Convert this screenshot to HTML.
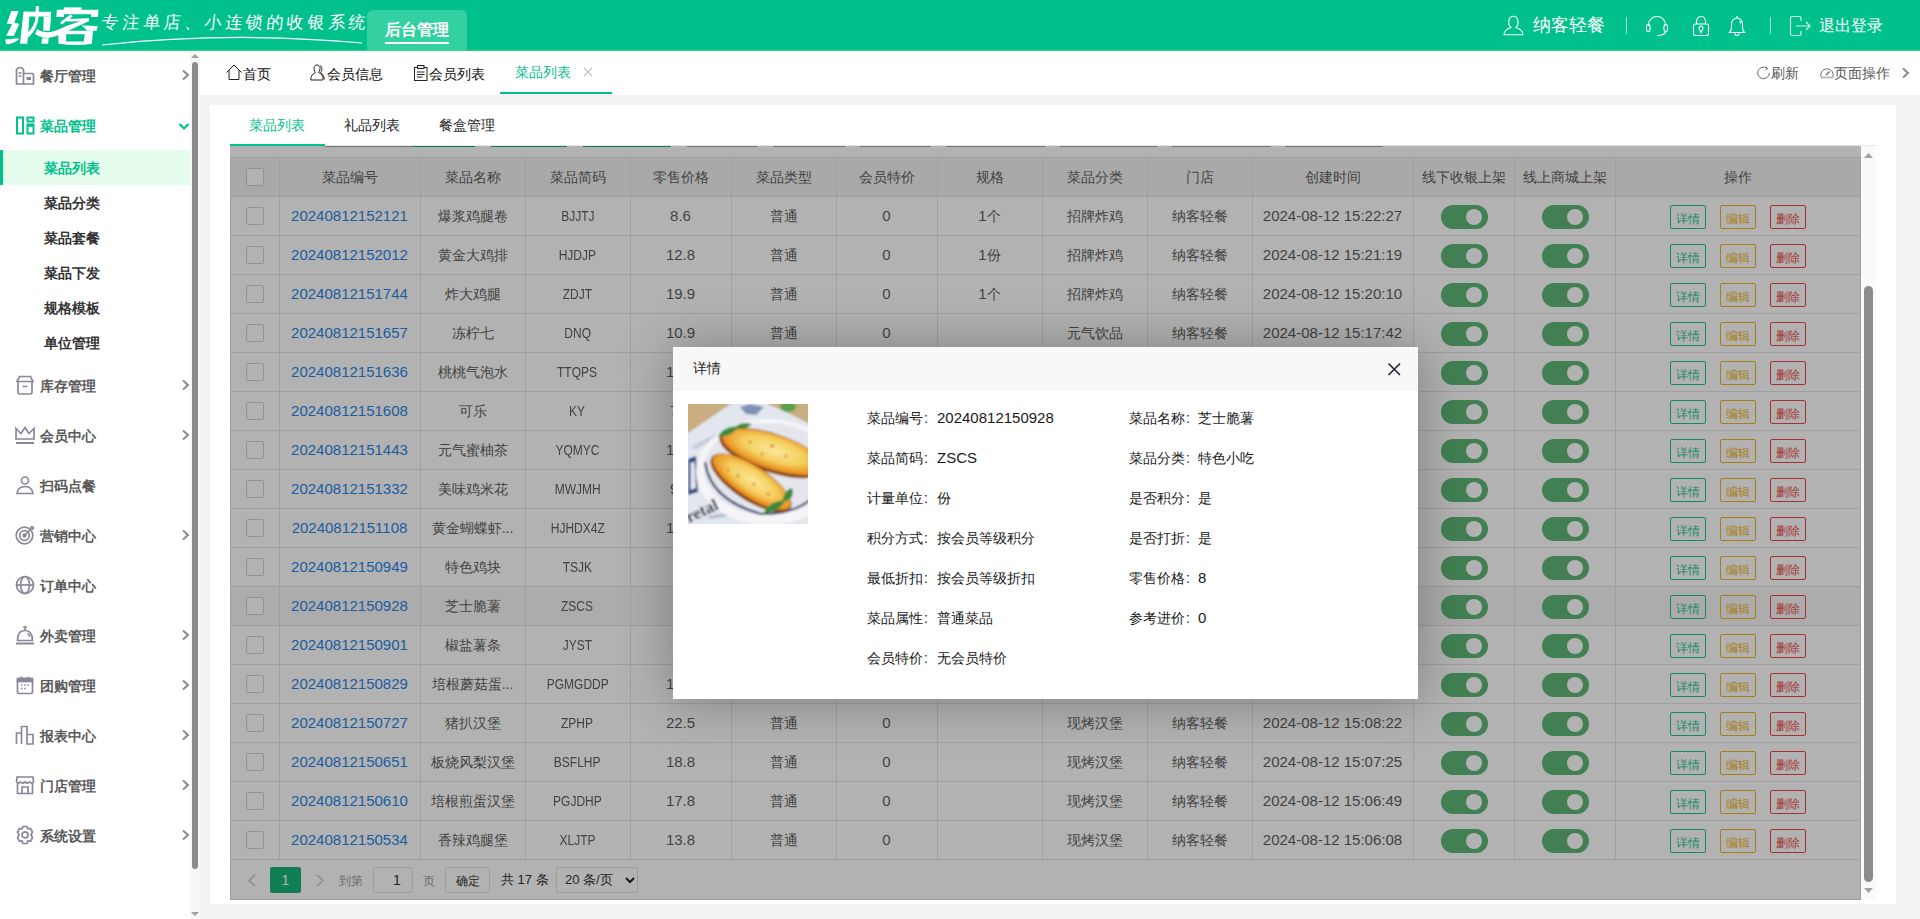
<!DOCTYPE html><html><head><meta charset="utf-8"><title>纳客</title><style>
*{margin:0;padding:0;box-sizing:border-box}
html,body{width:1920px;height:919px;overflow:hidden;background:#f3f3f3;font-family:"Liberation Sans",sans-serif;font-size:14px;color:#333}
.a{position:absolute}
#hd{left:0;top:0;width:1920px;height:50px;background:#00c18c}
#hdl{left:0;top:50px;width:1920px;height:1px;background:#3cd27c}
.logo{left:7px;top:4px;font-size:39px;font-weight:900;color:#fff;-webkit-text-stroke:1.6px #fff;letter-spacing:-1px;line-height:44px;transform:scaleX(1.16) skewX(-10deg);transform-origin:0 100%}
.tag{left:102px;top:10px;font-family:"Liberation Serif",serif;font-size:17px;color:#fff;letter-spacing:3.55px;line-height:26px;white-space:nowrap;transform:skewX(-6deg)}
.htab{left:367px;top:10px;width:100px;height:40px;background:#33d1a1;border-radius:6px 6px 0 0}
.htab span{position:absolute;left:18px;top:10px;font-size:16px;font-weight:bold;color:#fff;line-height:20px;white-space:nowrap}
.htab i{position:absolute;left:18px;top:32px;width:64px;height:2px;background:#fff}
.hr{color:#fff;white-space:nowrap;line-height:20px}
#sb{left:0;top:51px;width:190px;height:868px;background:#fff}
#sbt{left:190px;top:51px;width:10px;height:868px;background:#f7f7f7}
.sth{left:192px;top:62px;width:6px;height:807px;background:#8c8c8c;border-radius:3px}
.mi{left:40px;font-size:14px;font-weight:bold;color:#5a5a5a;line-height:16px;white-space:nowrap}
.si{left:44px;font-size:14px;font-weight:bold;color:#333;line-height:16px;white-space:nowrap}
.arr{left:180px;width:10px;height:12px}
#tb{left:200px;top:51px;width:1720px;height:44px;background:#fff}
#gbg{left:200px;top:95px;width:1720px;height:824px;background:#f3f3f3}
.tt{font-size:14px;color:#111;line-height:16px;white-space:nowrap}
#card{left:210px;top:105px;width:1686px;height:799px;background:#fff}
.st{top:117px;font-size:14px;color:#222;line-height:16px;white-space:nowrap}
#ifr{left:230px;top:146px;width:1646px;height:754px;background:#fff;overflow:hidden}
.c{position:absolute;text-align:center;white-space:nowrap;line-height:40px;font-size:14px;color:#5f5f5f;overflow:hidden}
.vl{position:absolute;width:1px;background:#e4e4e4}
.hl{position:absolute;height:1px;background:#e4e4e4}
.lnk{color:#2a86e6}
.n{font-size:15px}
.cd{display:inline-block;font-size:15px;transform:scaleX(.8)}
.cb{position:absolute;width:18px;height:18px;border:1px solid #d2d2d2;border-radius:2px;background:#fff}
.sw{position:absolute;width:47px;height:24px;border-radius:12px;background:#5fb878}
.sw i{position:absolute;right:6px;top:4px;width:16px;height:16px;border-radius:50%;background:#fff}
.bt{position:absolute;width:36px;height:24px;border:1px solid;border-radius:2px;font-size:12px;line-height:26px;text-align:center;white-space:nowrap}
.b1{border-color:#1dc498;color:#1dc498}
.b2{border-color:#f2b51c;color:#f2b51c}
.b3{border-color:#f04545;color:#f04545}
#shade{left:230px;top:146px;width:1631px;height:754px;background:rgba(0,0,0,.3)}
#modal{left:673px;top:347px;width:745px;height:352px;background:#fff;box-shadow:1px 1px 50px rgba(0,0,0,.3)}
.mt{position:absolute;left:0;top:0;width:745px;height:43px;background:#f8f8f8;border-bottom:1px solid #f0f0f0}
.ml{position:absolute;font-size:14px;color:#1a1a1a;line-height:20px;white-space:nowrap}
</style></head><body><div id="hd" class="a"></div><div id="hdl" class="a"></div><svg class="a" style="left:0;top:0" width="105" height="50" viewBox="0 0 1920 914" fill="#fff">
<path d="M205 200 L340 200 L262 412 L352 440 L255 655 L115 655 L220 445 L125 430 Z"/>
<path d="M95 720 L345 700 L330 738 Q250 790 150 810 L110 805 Z"/>
<path d="M430 215 L545 215 L500 800 L365 800 Z"/>
<path d="M430 215 L935 215 L930 300 L540 300 Z"/>
<path d="M800 300 L935 300 L910 560 L790 560 Z"/>
<path d="M770 700 L890 700 L880 800 L755 800 Z"/>
<path d="M655 110 L712 110 L705 300 L650 300 Z"/>
<path d="M650 300 L705 300 Q700 510 515 690 L505 600 Q640 470 650 300 Z"/>
<path d="M680 535 Q760 590 870 590 Q980 590 1200 480 L1625 335 L1630 385 L1250 560 Q1000 680 880 695 Q760 700 640 620 Z"/>
<path d="M1165 135 L1490 135 L1490 190 L1165 190 Z"/>
<path d="M1040 180 L1800 180 L1790 310 L1665 310 L1665 260 L1170 260 L1170 310 L1030 310 Z"/>
<path d="M1290 265 L1330 300 L1130 450 L1095 410 Z"/>
<path d="M1220 345 L1625 335 L1620 390 L1220 395 Z"/>
<path d="M1490 460 L1790 480 L1765 560 L1600 560 Z"/>
<path fill-rule="evenodd" d="M1065 560 L1700 560 L1680 800 Q1400 845 1070 800 Z M1210 625 L1550 625 L1530 760 L1210 760 Z"/>
</svg><div class="a tag">专注单店、小连锁的收银系统</div><svg class="a" style="left:100px;top:34px" width="265" height="14"><path d="M2 11 Q 130 -3 262 9" stroke="#fff" stroke-width="1.2" fill="none"/></svg><div class="a htab"><span>后台管理</span><i></i></div><svg class="a" style="left:1503px;top:15px" width="22" height="22" viewBox="0 0 22 22" fill="none" stroke="#fff" stroke-width="1.1"><path d="M8 12.6 C4.5 10 5 1.2 10.4 1.2 C15.8 1.2 16.3 10 12.8 12.6 C17 14 20 16 20 19.7 H1 C1 16 4 14 8 12.6 Z"/></svg><div class="a hr" style="left:1533px;top:15px;font-size:18px">纳客轻餐</div><div class="a" style="left:1626px;top:17px;width:1px;height:17px;background:rgba(255,255,255,.6)"></div><svg class="a" style="left:1645px;top:15px" width="24" height="22" viewBox="0 0 24 22" fill="none" stroke="#fff" stroke-width="1.1"><path d="M3.5 11 V9.5 A8.5 8 0 0 1 20.5 9.5 V11"/><rect x="1.5" y="9.5" width="3.5" height="7" rx="1.7"/><rect x="19" y="9.5" width="3.5" height="7" rx="1.7"/><path d="M21 16.5 Q19.5 20.5 12 20.5"/></svg><svg class="a" style="left:1692px;top:15px" width="18" height="22" viewBox="0 0 18 22" fill="none" stroke="#fff" stroke-width="1.1"><path d="M4.5 9 V6 A4.5 4.5 0 0 1 13.5 6 V9"/><rect x="1.5" y="9" width="15" height="11.5" rx="2"/><path d="M9 17.5 L7.3 14.3 A2 2 0 1 1 10.7 14.3 Z"/></svg><svg class="a" style="left:1728px;top:15px" width="18" height="22" viewBox="0 0 18 22" fill="none" stroke="#fff" stroke-width="1.1"><path d="M9 1 V3"/><path d="M1.5 17.5 Q3.5 16 3.5 12 V9 A5.5 6 0 0 1 14.5 9 V12 Q14.5 16 16.5 17.5 Z"/><path d="M7 18.5 A2 2 0 0 0 11 18.5 M11.5 6 Q12.5 7 12.8 8.5"/></svg><div class="a" style="left:1770px;top:17px;width:1px;height:17px;background:rgba(255,255,255,.6)"></div><svg class="a" style="left:1789px;top:15px" width="23" height="22" viewBox="0 0 23 22" fill="none" stroke="rgba(255,255,255,.8)" stroke-width="1.2"><path d="M12 6 V3 A1.5 1.5 0 0 0 10.5 1.5 H3 A1.5 1.5 0 0 0 1.5 3 V19 A1.5 1.5 0 0 0 3 20.5 H10.5 A1.5 1.5 0 0 0 12 19 V16"/><path d="M7 11 H21 M17 7 L21 11 L17 15"/></svg><div class="a hr" style="left:1819px;top:16px;font-size:16px">退出登录</div><div id="sb" class="a"></div><div id="sbt" class="a"></div><div class="a sth"></div><svg class="a" style="left:191px;top:53px" width="8" height="5"><path d="M0 5 L4 1 L8 5 Z" fill="#a0a0a0"/></svg><svg class="a" style="left:191px;top:912px" width="8" height="5"><path d="M0 0 L4 4 L8 0 Z" fill="#a0a0a0"/></svg><svg class="a" style="left:15px;top:65px" width="20" height="20" viewBox="0 0 20 20" fill="none" stroke="#8a8799" stroke-width="1.7"><path d="M1.5 19 V4.5 Q5 0.5 8.5 4.5 V19 Z M8.5 8.5 H17 Q18.5 8.5 18.5 10 V19 H1.5 M3.5 8 H6.5 M3.5 11 H6.5"/><rect x="11.5" y="12" width="4.5" height="3" fill="#8a8799" stroke="none"/></svg><div class="a mi" style="top:68px">餐厅管理</div><svg class="a" style="left:181px;top:69px" width="9" height="12"><path d="M2 1.5 L7 6 L2 10.5" stroke="#8a8799" stroke-width="2" fill="none"/></svg><svg class="a" style="left:15px;top:375px" width="20" height="20" viewBox="0 0 20 20" fill="none" stroke="#8a8799" stroke-width="1.7"><path d="M2 6.5 L4.5 1.5 H15.5 L18 6.5 Z M3 6.5 V17.5 Q3 19 4.5 19 H15.5 Q17 19 17 17.5 V6.5 M7.5 11.5 H12.5"/></svg><div class="a mi" style="top:378px">库存管理</div><svg class="a" style="left:181px;top:379px" width="9" height="12"><path d="M2 1.5 L7 6 L2 10.5" stroke="#8a8799" stroke-width="2" fill="none"/></svg><svg class="a" style="left:15px;top:425px" width="20" height="20" viewBox="0 0 20 20" fill="none" stroke="#8a8799" stroke-width="1.7"><path d="M1 3.5 L6 8.5 L10 2.5 L14 8.5 L19 3.5 V14 H1 Z"/><path d="M1 18 H19" stroke-width="2"/></svg><div class="a mi" style="top:428px">会员中心</div><svg class="a" style="left:181px;top:429px" width="9" height="12"><path d="M2 1.5 L7 6 L2 10.5" stroke="#8a8799" stroke-width="2" fill="none"/></svg><svg class="a" style="left:15px;top:475px" width="20" height="20" viewBox="0 0 20 20" fill="none" stroke="#8a8799" stroke-width="1.7"><circle cx="10" cy="5.5" r="3.5"/><path d="M2 18.5 Q3 11.5 10 11.5 Q17 11.5 18 18.5 Z"/></svg><div class="a mi" style="top:478px">扫码点餐</div><svg class="a" style="left:15px;top:525px" width="20" height="20" viewBox="0 0 20 20" fill="none" stroke="#8a8799" stroke-width="1.7"><circle cx="9.5" cy="10.5" r="8.3"/><circle cx="9.5" cy="10.5" r="4.8"/><circle cx="9.5" cy="10.5" r="1.3" fill="#8a8799"/><path d="M9.5 10.5 L17.5 2.5 M15 2 L18 2 L18 5"/></svg><div class="a mi" style="top:528px">营销中心</div><svg class="a" style="left:181px;top:529px" width="9" height="12"><path d="M2 1.5 L7 6 L2 10.5" stroke="#8a8799" stroke-width="2" fill="none"/></svg><svg class="a" style="left:15px;top:575px" width="20" height="20" viewBox="0 0 20 20" fill="none" stroke="#8a8799" stroke-width="1.7"><circle cx="10" cy="10" r="8.5"/><ellipse cx="10" cy="10" rx="4.5" ry="8.5"/><path d="M1.5 10 H18.5"/></svg><div class="a mi" style="top:578px">订单中心</div><svg class="a" style="left:15px;top:625px" width="20" height="20" viewBox="0 0 20 20" fill="none" stroke="#8a8799" stroke-width="1.7"><path d="M2.5 15.5 Q2.5 5.5 10 5.5 Q17.5 5.5 17.5 15.5 Z M8 2 H12 M10 2 V5.5 M12.5 8.5 Q14.5 9.5 15 11.5"/><path d="M1 18.5 H19" stroke-width="2"/></svg><div class="a mi" style="top:628px">外卖管理</div><svg class="a" style="left:181px;top:629px" width="9" height="12"><path d="M2 1.5 L7 6 L2 10.5" stroke="#8a8799" stroke-width="2" fill="none"/></svg><svg class="a" style="left:15px;top:675px" width="20" height="20" viewBox="0 0 20 20" fill="none" stroke="#8a8799" stroke-width="1.7"><rect x="2.5" y="3.5" width="15" height="15" rx="1.5"/><rect x="2.5" y="3.5" width="15" height="3" fill="#8a8799"/><path d="M6.5 1.5 V4 M13.5 1.5 V4 M6 10 H7.5 M9.3 10 H10.8 M12.5 10 H14 M6 13.5 H7.5 M9.3 13.5 H10.8" stroke-width="1.6"/></svg><div class="a mi" style="top:678px">团购管理</div><svg class="a" style="left:181px;top:679px" width="9" height="12"><path d="M2 1.5 L7 6 L2 10.5" stroke="#8a8799" stroke-width="2" fill="none"/></svg><svg class="a" style="left:15px;top:725px" width="20" height="20" viewBox="0 0 20 20" fill="none" stroke="#8a8799" stroke-width="1.7"><path d="M1.5 19 V8 H6.5 V19 M6.5 19 V1.5 H12 V19 M12 19 V9.5 H18 V19 Z"/></svg><div class="a mi" style="top:728px">报表中心</div><svg class="a" style="left:181px;top:729px" width="9" height="12"><path d="M2 1.5 L7 6 L2 10.5" stroke="#8a8799" stroke-width="2" fill="none"/></svg><svg class="a" style="left:15px;top:775px" width="20" height="20" viewBox="0 0 20 20" fill="none" stroke="#8a8799" stroke-width="1.7"><path d="M2 2 H18 L18.5 7 Q16.5 9 14.5 7 Q12.5 9 10 7 Q7.5 9 5.5 7 Q3.5 9 1.5 7 Z M2.5 8 V18.5 H17.5 V8 M7 18.5 V12 H13 V18.5"/></svg><div class="a mi" style="top:778px">门店管理</div><svg class="a" style="left:181px;top:779px" width="9" height="12"><path d="M2 1.5 L7 6 L2 10.5" stroke="#8a8799" stroke-width="2" fill="none"/></svg><svg class="a" style="left:15px;top:825px" width="20" height="20" viewBox="0 0 20 20" fill="none" stroke="#8a8799" stroke-width="1.7"><path d="M8 1.5 H12 L13 4 L15.5 3.5 L17.5 7 L16 9.8 L17.5 12.8 L15.5 16.3 L13 15.8 L12 18.5 H8 L7 15.8 L4.5 16.3 L2.5 12.8 L4 9.8 L2.5 7 L4.5 3.5 L7 4 Z"/><circle cx="10" cy="9.9" r="3"/></svg><div class="a mi" style="top:828px">系统设置</div><svg class="a" style="left:181px;top:829px" width="9" height="12"><path d="M2 1.5 L7 6 L2 10.5" stroke="#8a8799" stroke-width="2" fill="none"/></svg><svg class="a" style="left:15px;top:116px" width="20" height="19" viewBox="0 0 20 19" fill="none" stroke="#00c18c" stroke-width="2"><rect x="2" y="1.5" width="6" height="16"/><rect x="12.5" y="1.5" width="6" height="4"/><rect x="12.5" y="8.5" width="6" height="9"/><path d="M12.5 9.3 H18.5" stroke-width="3"/></svg><div class="a mi" style="top:118px;color:#00c18c">菜品管理</div><svg class="a" style="left:178px;top:122px" width="12" height="9"><path d="M1.5 2 L6 6.5 L10.5 2" stroke="#00c18c" stroke-width="2.2" fill="none"/></svg><div class="a" style="left:0;top:150px;width:190px;height:35px;background:#e5fbec"></div><div class="a" style="left:0;top:150px;width:3px;height:35px;background:#00c18c"></div><div class="a si" style="top:160px;color:#00c18c">菜品列表</div><div class="a si" style="top:195px">菜品分类</div><div class="a si" style="top:230px">菜品套餐</div><div class="a si" style="top:265px">菜品下发</div><div class="a si" style="top:300px">规格模板</div><div class="a si" style="top:335px">单位管理</div><div id="tb" class="a"></div><svg class="a" style="left:226px;top:64px" width="17" height="17" viewBox="0 0 17 17" fill="none" stroke="#222" stroke-width="1"><path d="M0.5 8.5 L8 1 L15.5 8.5 M3 6 V15.5 H13 V6"/></svg><div class="a tt" style="left:243px;top:66px">首页</div><svg class="a" style="left:310px;top:64px" width="17" height="17" viewBox="0 0 17 17" fill="none" stroke="#222" stroke-width="1"><path d="M7 1 C3.5 1 3 5.5 5.5 8.5 C2 10 0.5 13 0.8 16 H13 C13.3 13 12 10 8.5 8.5 C11 5.5 10.5 1 7 1 Z M10 1.5 C12.5 2.5 12.5 6.5 10.5 8.5 C13 10 14.3 13 14.3 15.5"/></svg><div class="a tt" style="left:327px;top:66px">会员信息</div><svg class="a" style="left:414px;top:65px" width="14" height="16" viewBox="0 0 14 16" fill="none" stroke="#222" stroke-width="1"><rect x="0.5" y="2.5" width="12.5" height="13"/><rect x="3.5" y="0.5" width="6.5" height="3" fill="#e8e8e8"/><path d="M3 7 H10.5 M3 9.5 H10.5 M3 12 H8.5"/></svg><div class="a tt" style="left:429px;top:66px">会员列表</div><div class="a tt" style="left:515px;top:64px;color:#00c18c">菜品列表</div><svg class="a" style="left:583px;top:67px" width="10" height="10"><path d="M1 1 L9 9 M9 1 L1 9" stroke="#c2c2c2" stroke-width="1.2"/></svg><div class="a" style="left:500px;top:92px;width:112px;height:2px;background:#00c18c"></div><svg class="a" style="left:1757px;top:66px" width="14" height="14" viewBox="0 0 14 14" fill="none" stroke="#666" stroke-width="1"><path d="M12.3 7 A5.8 5.8 0 1 1 10 2.3"/><path d="M8.8 0.8 L10.6 2.4 L9 4.3"/></svg><div class="a tt" style="left:1771px;top:65px;color:#555">刷新</div><svg class="a" style="left:1820px;top:66px" width="15" height="14" viewBox="0 0 15 14" fill="none" stroke="#666" stroke-width="1"><path d="M1.3 11.5 A6.2 6.2 0 1 1 12.7 11.5"/><path d="M1 11.5 H13" stroke="#bbb" stroke-width="2"/><path d="M6 9 L9.5 5.5" stroke-width="1.3"/></svg><div class="a tt" style="left:1834px;top:65px;color:#555">页面操作</div><svg class="a" style="left:1901px;top:67px" width="9" height="13"><path d="M2 1.5 L7 6 L2 10.5" stroke="#8a8799" stroke-width="2" fill="none"/></svg><div id="card" class="a"></div><div class="a st" style="left:249px;color:#00c18c">菜品列表</div><div class="a st" style="left:344px">礼品列表</div><div class="a st" style="left:439px">餐盒管理</div><div class="a" style="left:230px;top:145px;width:1646px;height:1px;background:#e6e6e6"></div><div class="a" style="left:230px;top:144px;width:95px;height:2px;background:#00c18c"></div><div id="ifr" class="a"><div class="hl" style="left:95px;top:0;width:87px;background:#aaa"></div><div class="hl" style="left:182px;top:0;width:63px;background:#16b777"></div><div class="hl" style="left:261px;top:0;width:76px;background:#16b777"></div><div class="hl" style="left:353px;top:0;width:88px;background:#16b777"></div><div class="hl" style="left:457px;top:0;width:70px;background:#aaa"></div><div class="hl" style="left:543px;top:0;width:72px;background:#aaa"></div><div class="hl" style="left:630px;top:0;width:71px;background:#aaa"></div><div class="hl" style="left:716px;top:0;width:99px;background:#aaa"></div><div class="hl" style="left:830px;top:0;width:97px;background:#aaa"></div><div class="hl" style="left:942px;top:0;width:99px;background:#aaa"></div><div class="hl" style="left:1055px;top:0;width:98px;background:#aaa"></div><div class="a" style="left:0;top:11px;width:1630px;height:39px;background:#f2f2f2"></div><div class="a" style="left:0;top:440px;width:1630px;height:39px;background:#f6f6f6"></div><div class="hl" style="left:0;top:11px;width:1630px"></div><div class="hl" style="left:0;top:50px;width:1630px"></div><div class="hl" style="left:0;top:89px;width:1630px"></div><div class="hl" style="left:0;top:128px;width:1630px"></div><div class="hl" style="left:0;top:167px;width:1630px"></div><div class="hl" style="left:0;top:206px;width:1630px"></div><div class="hl" style="left:0;top:245px;width:1630px"></div><div class="hl" style="left:0;top:284px;width:1630px"></div><div class="hl" style="left:0;top:323px;width:1630px"></div><div class="hl" style="left:0;top:362px;width:1630px"></div><div class="hl" style="left:0;top:401px;width:1630px"></div><div class="hl" style="left:0;top:440px;width:1630px"></div><div class="hl" style="left:0;top:479px;width:1630px"></div><div class="hl" style="left:0;top:518px;width:1630px"></div><div class="hl" style="left:0;top:557px;width:1630px"></div><div class="hl" style="left:0;top:596px;width:1630px"></div><div class="hl" style="left:0;top:635px;width:1630px"></div><div class="hl" style="left:0;top:674px;width:1630px"></div><div class="hl" style="left:0;top:713px;width:1630px"></div><div class="hl" style="left:0;top:753px;width:1631px"></div><div class="vl" style="left:0px;top:11px;height:743px"></div><div class="vl" style="left:49px;top:11px;height:702px"></div><div class="vl" style="left:190px;top:11px;height:702px"></div><div class="vl" style="left:295px;top:11px;height:702px"></div><div class="vl" style="left:400px;top:11px;height:702px"></div><div class="vl" style="left:501px;top:11px;height:702px"></div><div class="vl" style="left:606px;top:11px;height:702px"></div><div class="vl" style="left:707px;top:11px;height:702px"></div><div class="vl" style="left:812px;top:11px;height:702px"></div><div class="vl" style="left:917px;top:11px;height:702px"></div><div class="vl" style="left:1022px;top:11px;height:702px"></div><div class="vl" style="left:1183px;top:11px;height:702px"></div><div class="vl" style="left:1284px;top:11px;height:702px"></div><div class="vl" style="left:1385px;top:11px;height:702px"></div><div class="vl" style="left:1630px;top:11px;height:743px"></div><div class="cb" style="left:16px;top:22px"></div><div class="c" style="left:49px;top:11px;width:141px;height:38px">菜品编号</div><div class="c" style="left:190px;top:11px;width:105px;height:38px">菜品名称</div><div class="c" style="left:295px;top:11px;width:105px;height:38px">菜品简码</div><div class="c" style="left:400px;top:11px;width:101px;height:38px">零售价格</div><div class="c" style="left:501px;top:11px;width:105px;height:38px">菜品类型</div><div class="c" style="left:606px;top:11px;width:101px;height:38px">会员特价</div><div class="c" style="left:707px;top:11px;width:105px;height:38px">规格</div><div class="c" style="left:812px;top:11px;width:105px;height:38px">菜品分类</div><div class="c" style="left:917px;top:11px;width:105px;height:38px">门店</div><div class="c" style="left:1022px;top:11px;width:161px;height:38px">创建时间</div><div class="c" style="left:1183px;top:11px;width:101px;height:38px">线下收银上架</div><div class="c" style="left:1284px;top:11px;width:101px;height:38px">线上商城上架</div><div class="c" style="left:1385px;top:11px;width:245px;height:38px">操作</div><div class="cb" style="left:16px;top:61px"></div><div class="c lnk n" style="left:49px;top:50px;width:141px;height:38px">20240812152121</div><div class="c" style="left:190px;top:50px;width:105px;height:38px">爆浆鸡腿卷</div><div class="c" style="left:295px;top:50px;width:105px;height:38px"><span class="cd">BJJTJ</span></div><div class="c n" style="left:400px;top:50px;width:101px;height:38px">8.6</div><div class="c" style="left:501px;top:50px;width:105px;height:38px">普通</div><div class="c n" style="left:606px;top:50px;width:101px;height:38px">0</div><div class="c" style="left:707px;top:50px;width:105px;height:38px"><span class="n">1</span>个</div><div class="c" style="left:812px;top:50px;width:105px;height:38px">招牌炸鸡</div><div class="c" style="left:917px;top:50px;width:105px;height:38px">纳客轻餐</div><div class="c n" style="left:1022px;top:50px;width:161px;height:38px">2024-08-12 15:22:27</div><div class="sw" style="left:1211px;top:59px"><i></i></div><div class="sw" style="left:1312px;top:59px"><i></i></div><div class="bt b1" style="left:1440px;top:59px">详情</div><div class="bt b2" style="left:1490px;top:59px">编辑</div><div class="bt b3" style="left:1540px;top:59px">删除</div><div class="cb" style="left:16px;top:100px"></div><div class="c lnk n" style="left:49px;top:89px;width:141px;height:38px">20240812152012</div><div class="c" style="left:190px;top:89px;width:105px;height:38px">黄金大鸡排</div><div class="c" style="left:295px;top:89px;width:105px;height:38px"><span class="cd">HJDJP</span></div><div class="c n" style="left:400px;top:89px;width:101px;height:38px">12.8</div><div class="c" style="left:501px;top:89px;width:105px;height:38px">普通</div><div class="c n" style="left:606px;top:89px;width:101px;height:38px">0</div><div class="c" style="left:707px;top:89px;width:105px;height:38px"><span class="n">1</span>份</div><div class="c" style="left:812px;top:89px;width:105px;height:38px">招牌炸鸡</div><div class="c" style="left:917px;top:89px;width:105px;height:38px">纳客轻餐</div><div class="c n" style="left:1022px;top:89px;width:161px;height:38px">2024-08-12 15:21:19</div><div class="sw" style="left:1211px;top:98px"><i></i></div><div class="sw" style="left:1312px;top:98px"><i></i></div><div class="bt b1" style="left:1440px;top:98px">详情</div><div class="bt b2" style="left:1490px;top:98px">编辑</div><div class="bt b3" style="left:1540px;top:98px">删除</div><div class="cb" style="left:16px;top:139px"></div><div class="c lnk n" style="left:49px;top:128px;width:141px;height:38px">20240812151744</div><div class="c" style="left:190px;top:128px;width:105px;height:38px">炸大鸡腿</div><div class="c" style="left:295px;top:128px;width:105px;height:38px"><span class="cd">ZDJT</span></div><div class="c n" style="left:400px;top:128px;width:101px;height:38px">19.9</div><div class="c" style="left:501px;top:128px;width:105px;height:38px">普通</div><div class="c n" style="left:606px;top:128px;width:101px;height:38px">0</div><div class="c" style="left:707px;top:128px;width:105px;height:38px"><span class="n">1</span>个</div><div class="c" style="left:812px;top:128px;width:105px;height:38px">招牌炸鸡</div><div class="c" style="left:917px;top:128px;width:105px;height:38px">纳客轻餐</div><div class="c n" style="left:1022px;top:128px;width:161px;height:38px">2024-08-12 15:20:10</div><div class="sw" style="left:1211px;top:137px"><i></i></div><div class="sw" style="left:1312px;top:137px"><i></i></div><div class="bt b1" style="left:1440px;top:137px">详情</div><div class="bt b2" style="left:1490px;top:137px">编辑</div><div class="bt b3" style="left:1540px;top:137px">删除</div><div class="cb" style="left:16px;top:178px"></div><div class="c lnk n" style="left:49px;top:167px;width:141px;height:38px">20240812151657</div><div class="c" style="left:190px;top:167px;width:105px;height:38px">冻柠七</div><div class="c" style="left:295px;top:167px;width:105px;height:38px"><span class="cd">DNQ</span></div><div class="c n" style="left:400px;top:167px;width:101px;height:38px">10.9</div><div class="c" style="left:501px;top:167px;width:105px;height:38px">普通</div><div class="c n" style="left:606px;top:167px;width:101px;height:38px">0</div><div class="c" style="left:707px;top:167px;width:105px;height:38px"></div><div class="c" style="left:812px;top:167px;width:105px;height:38px">元气饮品</div><div class="c" style="left:917px;top:167px;width:105px;height:38px">纳客轻餐</div><div class="c n" style="left:1022px;top:167px;width:161px;height:38px">2024-08-12 15:17:42</div><div class="sw" style="left:1211px;top:176px"><i></i></div><div class="sw" style="left:1312px;top:176px"><i></i></div><div class="bt b1" style="left:1440px;top:176px">详情</div><div class="bt b2" style="left:1490px;top:176px">编辑</div><div class="bt b3" style="left:1540px;top:176px">删除</div><div class="cb" style="left:16px;top:217px"></div><div class="c lnk n" style="left:49px;top:206px;width:141px;height:38px">20240812151636</div><div class="c" style="left:190px;top:206px;width:105px;height:38px">桃桃气泡水</div><div class="c" style="left:295px;top:206px;width:105px;height:38px"><span class="cd">TTQPS</span></div><div class="c n" style="left:400px;top:206px;width:101px;height:38px">12.5</div><div class="c" style="left:501px;top:206px;width:105px;height:38px">普通</div><div class="c n" style="left:606px;top:206px;width:101px;height:38px">0</div><div class="c" style="left:707px;top:206px;width:105px;height:38px"></div><div class="c" style="left:812px;top:206px;width:105px;height:38px">元气饮品</div><div class="c" style="left:917px;top:206px;width:105px;height:38px">纳客轻餐</div><div class="c n" style="left:1022px;top:206px;width:161px;height:38px">2024-08-12 15:17:01</div><div class="sw" style="left:1211px;top:215px"><i></i></div><div class="sw" style="left:1312px;top:215px"><i></i></div><div class="bt b1" style="left:1440px;top:215px">详情</div><div class="bt b2" style="left:1490px;top:215px">编辑</div><div class="bt b3" style="left:1540px;top:215px">删除</div><div class="cb" style="left:16px;top:256px"></div><div class="c lnk n" style="left:49px;top:245px;width:141px;height:38px">20240812151608</div><div class="c" style="left:190px;top:245px;width:105px;height:38px">可乐</div><div class="c" style="left:295px;top:245px;width:105px;height:38px"><span class="cd">KY</span></div><div class="c n" style="left:400px;top:245px;width:101px;height:38px">7.5</div><div class="c" style="left:501px;top:245px;width:105px;height:38px">普通</div><div class="c n" style="left:606px;top:245px;width:101px;height:38px">0</div><div class="c" style="left:707px;top:245px;width:105px;height:38px"></div><div class="c" style="left:812px;top:245px;width:105px;height:38px">元气饮品</div><div class="c" style="left:917px;top:245px;width:105px;height:38px">纳客轻餐</div><div class="c n" style="left:1022px;top:245px;width:161px;height:38px">2024-08-12 15:16:37</div><div class="sw" style="left:1211px;top:254px"><i></i></div><div class="sw" style="left:1312px;top:254px"><i></i></div><div class="bt b1" style="left:1440px;top:254px">详情</div><div class="bt b2" style="left:1490px;top:254px">编辑</div><div class="bt b3" style="left:1540px;top:254px">删除</div><div class="cb" style="left:16px;top:295px"></div><div class="c lnk n" style="left:49px;top:284px;width:141px;height:38px">20240812151443</div><div class="c" style="left:190px;top:284px;width:105px;height:38px">元气蜜柚茶</div><div class="c" style="left:295px;top:284px;width:105px;height:38px"><span class="cd">YQMYC</span></div><div class="c n" style="left:400px;top:284px;width:101px;height:38px">12.8</div><div class="c" style="left:501px;top:284px;width:105px;height:38px">普通</div><div class="c n" style="left:606px;top:284px;width:101px;height:38px">0</div><div class="c" style="left:707px;top:284px;width:105px;height:38px"></div><div class="c" style="left:812px;top:284px;width:105px;height:38px">元气饮品</div><div class="c" style="left:917px;top:284px;width:105px;height:38px">纳客轻餐</div><div class="c n" style="left:1022px;top:284px;width:161px;height:38px">2024-08-12 15:16:08</div><div class="sw" style="left:1211px;top:293px"><i></i></div><div class="sw" style="left:1312px;top:293px"><i></i></div><div class="bt b1" style="left:1440px;top:293px">详情</div><div class="bt b2" style="left:1490px;top:293px">编辑</div><div class="bt b3" style="left:1540px;top:293px">删除</div><div class="cb" style="left:16px;top:334px"></div><div class="c lnk n" style="left:49px;top:323px;width:141px;height:38px">20240812151332</div><div class="c" style="left:190px;top:323px;width:105px;height:38px">美味鸡米花</div><div class="c" style="left:295px;top:323px;width:105px;height:38px"><span class="cd">MWJMH</span></div><div class="c n" style="left:400px;top:323px;width:101px;height:38px">9.9</div><div class="c" style="left:501px;top:323px;width:105px;height:38px">普通</div><div class="c n" style="left:606px;top:323px;width:101px;height:38px">0</div><div class="c" style="left:707px;top:323px;width:105px;height:38px"></div><div class="c" style="left:812px;top:323px;width:105px;height:38px">特色小吃</div><div class="c" style="left:917px;top:323px;width:105px;height:38px">纳客轻餐</div><div class="c n" style="left:1022px;top:323px;width:161px;height:38px">2024-08-12 15:14:43</div><div class="sw" style="left:1211px;top:332px"><i></i></div><div class="sw" style="left:1312px;top:332px"><i></i></div><div class="bt b1" style="left:1440px;top:332px">详情</div><div class="bt b2" style="left:1490px;top:332px">编辑</div><div class="bt b3" style="left:1540px;top:332px">删除</div><div class="cb" style="left:16px;top:373px"></div><div class="c lnk n" style="left:49px;top:362px;width:141px;height:38px">20240812151108</div><div class="c" style="left:190px;top:362px;width:105px;height:38px">黄金蝴蝶虾...</div><div class="c" style="left:295px;top:362px;width:105px;height:38px"><span class="cd">HJHDX4Z</span></div><div class="c n" style="left:400px;top:362px;width:101px;height:38px">15.9</div><div class="c" style="left:501px;top:362px;width:105px;height:38px">普通</div><div class="c n" style="left:606px;top:362px;width:101px;height:38px">0</div><div class="c" style="left:707px;top:362px;width:105px;height:38px"></div><div class="c" style="left:812px;top:362px;width:105px;height:38px">特色小吃</div><div class="c" style="left:917px;top:362px;width:105px;height:38px">纳客轻餐</div><div class="c n" style="left:1022px;top:362px;width:161px;height:38px">2024-08-12 15:13:32</div><div class="sw" style="left:1211px;top:371px"><i></i></div><div class="sw" style="left:1312px;top:371px"><i></i></div><div class="bt b1" style="left:1440px;top:371px">详情</div><div class="bt b2" style="left:1490px;top:371px">编辑</div><div class="bt b3" style="left:1540px;top:371px">删除</div><div class="cb" style="left:16px;top:412px"></div><div class="c lnk n" style="left:49px;top:401px;width:141px;height:38px">20240812150949</div><div class="c" style="left:190px;top:401px;width:105px;height:38px">特色鸡块</div><div class="c" style="left:295px;top:401px;width:105px;height:38px"><span class="cd">TSJK</span></div><div class="c n" style="left:400px;top:401px;width:101px;height:38px">8</div><div class="c" style="left:501px;top:401px;width:105px;height:38px">普通</div><div class="c n" style="left:606px;top:401px;width:101px;height:38px">0</div><div class="c" style="left:707px;top:401px;width:105px;height:38px"></div><div class="c" style="left:812px;top:401px;width:105px;height:38px">特色小吃</div><div class="c" style="left:917px;top:401px;width:105px;height:38px">纳客轻餐</div><div class="c n" style="left:1022px;top:401px;width:161px;height:38px">2024-08-12 15:11:08</div><div class="sw" style="left:1211px;top:410px"><i></i></div><div class="sw" style="left:1312px;top:410px"><i></i></div><div class="bt b1" style="left:1440px;top:410px">详情</div><div class="bt b2" style="left:1490px;top:410px">编辑</div><div class="bt b3" style="left:1540px;top:410px">删除</div><div class="cb" style="left:16px;top:451px"></div><div class="c lnk n" style="left:49px;top:440px;width:141px;height:38px">20240812150928</div><div class="c" style="left:190px;top:440px;width:105px;height:38px">芝士脆薯</div><div class="c" style="left:295px;top:440px;width:105px;height:38px"><span class="cd">ZSCS</span></div><div class="c n" style="left:400px;top:440px;width:101px;height:38px">8</div><div class="c" style="left:501px;top:440px;width:105px;height:38px">普通</div><div class="c n" style="left:606px;top:440px;width:101px;height:38px">0</div><div class="c" style="left:707px;top:440px;width:105px;height:38px"></div><div class="c" style="left:812px;top:440px;width:105px;height:38px">特色小吃</div><div class="c" style="left:917px;top:440px;width:105px;height:38px">纳客轻餐</div><div class="c n" style="left:1022px;top:440px;width:161px;height:38px">2024-08-12 15:09:49</div><div class="sw" style="left:1211px;top:449px"><i></i></div><div class="sw" style="left:1312px;top:449px"><i></i></div><div class="bt b1" style="left:1440px;top:449px">详情</div><div class="bt b2" style="left:1490px;top:449px">编辑</div><div class="bt b3" style="left:1540px;top:449px">删除</div><div class="cb" style="left:16px;top:490px"></div><div class="c lnk n" style="left:49px;top:479px;width:141px;height:38px">20240812150901</div><div class="c" style="left:190px;top:479px;width:105px;height:38px">椒盐薯条</div><div class="c" style="left:295px;top:479px;width:105px;height:38px"><span class="cd">JYST</span></div><div class="c n" style="left:400px;top:479px;width:101px;height:38px">8</div><div class="c" style="left:501px;top:479px;width:105px;height:38px">普通</div><div class="c n" style="left:606px;top:479px;width:101px;height:38px">0</div><div class="c" style="left:707px;top:479px;width:105px;height:38px"></div><div class="c" style="left:812px;top:479px;width:105px;height:38px">特色小吃</div><div class="c" style="left:917px;top:479px;width:105px;height:38px">纳客轻餐</div><div class="c n" style="left:1022px;top:479px;width:161px;height:38px">2024-08-12 15:09:28</div><div class="sw" style="left:1211px;top:488px"><i></i></div><div class="sw" style="left:1312px;top:488px"><i></i></div><div class="bt b1" style="left:1440px;top:488px">详情</div><div class="bt b2" style="left:1490px;top:488px">编辑</div><div class="bt b3" style="left:1540px;top:488px">删除</div><div class="cb" style="left:16px;top:529px"></div><div class="c lnk n" style="left:49px;top:518px;width:141px;height:38px">20240812150829</div><div class="c" style="left:190px;top:518px;width:105px;height:38px">培根蘑菇蛋...</div><div class="c" style="left:295px;top:518px;width:105px;height:38px"><span class="cd">PGMGDDP</span></div><div class="c n" style="left:400px;top:518px;width:101px;height:38px">16.8</div><div class="c" style="left:501px;top:518px;width:105px;height:38px">普通</div><div class="c n" style="left:606px;top:518px;width:101px;height:38px">0</div><div class="c" style="left:707px;top:518px;width:105px;height:38px"></div><div class="c" style="left:812px;top:518px;width:105px;height:38px">现烤汉堡</div><div class="c" style="left:917px;top:518px;width:105px;height:38px">纳客轻餐</div><div class="c n" style="left:1022px;top:518px;width:161px;height:38px">2024-08-12 15:09:01</div><div class="sw" style="left:1211px;top:527px"><i></i></div><div class="sw" style="left:1312px;top:527px"><i></i></div><div class="bt b1" style="left:1440px;top:527px">详情</div><div class="bt b2" style="left:1490px;top:527px">编辑</div><div class="bt b3" style="left:1540px;top:527px">删除</div><div class="cb" style="left:16px;top:568px"></div><div class="c lnk n" style="left:49px;top:557px;width:141px;height:38px">20240812150727</div><div class="c" style="left:190px;top:557px;width:105px;height:38px">猪扒汉堡</div><div class="c" style="left:295px;top:557px;width:105px;height:38px"><span class="cd">ZPHP</span></div><div class="c n" style="left:400px;top:557px;width:101px;height:38px">22.5</div><div class="c" style="left:501px;top:557px;width:105px;height:38px">普通</div><div class="c n" style="left:606px;top:557px;width:101px;height:38px">0</div><div class="c" style="left:707px;top:557px;width:105px;height:38px"></div><div class="c" style="left:812px;top:557px;width:105px;height:38px">现烤汉堡</div><div class="c" style="left:917px;top:557px;width:105px;height:38px">纳客轻餐</div><div class="c n" style="left:1022px;top:557px;width:161px;height:38px">2024-08-12 15:08:22</div><div class="sw" style="left:1211px;top:566px"><i></i></div><div class="sw" style="left:1312px;top:566px"><i></i></div><div class="bt b1" style="left:1440px;top:566px">详情</div><div class="bt b2" style="left:1490px;top:566px">编辑</div><div class="bt b3" style="left:1540px;top:566px">删除</div><div class="cb" style="left:16px;top:607px"></div><div class="c lnk n" style="left:49px;top:596px;width:141px;height:38px">20240812150651</div><div class="c" style="left:190px;top:596px;width:105px;height:38px">板烧风梨汉堡</div><div class="c" style="left:295px;top:596px;width:105px;height:38px"><span class="cd">BSFLHP</span></div><div class="c n" style="left:400px;top:596px;width:101px;height:38px">18.8</div><div class="c" style="left:501px;top:596px;width:105px;height:38px">普通</div><div class="c n" style="left:606px;top:596px;width:101px;height:38px">0</div><div class="c" style="left:707px;top:596px;width:105px;height:38px"></div><div class="c" style="left:812px;top:596px;width:105px;height:38px">现烤汉堡</div><div class="c" style="left:917px;top:596px;width:105px;height:38px">纳客轻餐</div><div class="c n" style="left:1022px;top:596px;width:161px;height:38px">2024-08-12 15:07:25</div><div class="sw" style="left:1211px;top:605px"><i></i></div><div class="sw" style="left:1312px;top:605px"><i></i></div><div class="bt b1" style="left:1440px;top:605px">详情</div><div class="bt b2" style="left:1490px;top:605px">编辑</div><div class="bt b3" style="left:1540px;top:605px">删除</div><div class="cb" style="left:16px;top:646px"></div><div class="c lnk n" style="left:49px;top:635px;width:141px;height:38px">20240812150610</div><div class="c" style="left:190px;top:635px;width:105px;height:38px">培根煎蛋汉堡</div><div class="c" style="left:295px;top:635px;width:105px;height:38px"><span class="cd">PGJDHP</span></div><div class="c n" style="left:400px;top:635px;width:101px;height:38px">17.8</div><div class="c" style="left:501px;top:635px;width:105px;height:38px">普通</div><div class="c n" style="left:606px;top:635px;width:101px;height:38px">0</div><div class="c" style="left:707px;top:635px;width:105px;height:38px"></div><div class="c" style="left:812px;top:635px;width:105px;height:38px">现烤汉堡</div><div class="c" style="left:917px;top:635px;width:105px;height:38px">纳客轻餐</div><div class="c n" style="left:1022px;top:635px;width:161px;height:38px">2024-08-12 15:06:49</div><div class="sw" style="left:1211px;top:644px"><i></i></div><div class="sw" style="left:1312px;top:644px"><i></i></div><div class="bt b1" style="left:1440px;top:644px">详情</div><div class="bt b2" style="left:1490px;top:644px">编辑</div><div class="bt b3" style="left:1540px;top:644px">删除</div><div class="cb" style="left:16px;top:685px"></div><div class="c lnk n" style="left:49px;top:674px;width:141px;height:38px">20240812150534</div><div class="c" style="left:190px;top:674px;width:105px;height:38px">香辣鸡腿堡</div><div class="c" style="left:295px;top:674px;width:105px;height:38px"><span class="cd">XLJTP</span></div><div class="c n" style="left:400px;top:674px;width:101px;height:38px">13.8</div><div class="c" style="left:501px;top:674px;width:105px;height:38px">普通</div><div class="c n" style="left:606px;top:674px;width:101px;height:38px">0</div><div class="c" style="left:707px;top:674px;width:105px;height:38px"></div><div class="c" style="left:812px;top:674px;width:105px;height:38px">现烤汉堡</div><div class="c" style="left:917px;top:674px;width:105px;height:38px">纳客轻餐</div><div class="c n" style="left:1022px;top:674px;width:161px;height:38px">2024-08-12 15:06:08</div><div class="sw" style="left:1211px;top:683px"><i></i></div><div class="sw" style="left:1312px;top:683px"><i></i></div><div class="bt b1" style="left:1440px;top:683px">详情</div><div class="bt b2" style="left:1490px;top:683px">编辑</div><div class="bt b3" style="left:1540px;top:683px">删除</div><svg class="a" style="left:17px;top:728px" width="10" height="13"><path d="M8 1 L2 6.5 L8 12" stroke="#c2c2c2" stroke-width="1.3" fill="none"/></svg><div class="a" style="left:40px;top:721px;width:31px;height:26px;background:#16b777;border-radius:2px;color:#fff;text-align:center;line-height:26px;font-size:14px">1</div><svg class="a" style="left:85px;top:728px" width="10" height="13"><path d="M2 1 L8 6.5 L2 12" stroke="#c2c2c2" stroke-width="1.3" fill="none"/></svg><div class="a" style="left:109px;top:727px;font-size:12px;color:#999;line-height:16px">到第</div><div class="a" style="left:143px;top:721px;width:40px;height:26px;border:1px solid #e2e2e2;border-radius:2px;padding-left:19px;line-height:24px;color:#333;font-size:14px">1</div><div class="a" style="left:193px;top:727px;font-size:12px;color:#999;line-height:16px">页</div><div class="a" style="left:215px;top:721px;width:45px;height:26px;border:1px solid #e2e2e2;border-radius:2px;text-align:center;line-height:26px;font-size:12px;color:#333">确定</div><div class="a" style="left:271px;top:726px;font-size:13px;color:#333;line-height:16px;white-space:nowrap">共 17 条</div><div class="a" style="left:326px;top:721px;width:82px;height:26px;border:1px solid #e2e2e2;border-radius:2px;line-height:24px;padding-left:8px;color:#333;white-space:nowrap;font-size:13px">20 条/页</div><svg class="a" style="left:395px;top:731px" width="10" height="7"><path d="M1 1 L5 5 L9 1" stroke="#222" stroke-width="2" fill="none"/></svg><div class="a" style="left:1631px;top:0;width:15px;height:754px;background:#fafafa"></div><svg class="a" style="left:1634px;top:6px" width="9" height="6"><path d="M0 6 L4.5 1 L9 6 Z" fill="#a3a3a3"/></svg><svg class="a" style="left:1634px;top:742px" width="9" height="6"><path d="M0 0 L4.5 5 L9 0 Z" fill="#a3a3a3"/></svg><div class="a" style="left:1634px;top:140px;width:9px;height:596px;background:#8c8c8c;border-radius:4.5px"></div></div><div id="shade" class="a"></div><div id="modal" class="a"><div class="mt"><span class="ml" style="left:20px;top:11px">详情</span></div><svg class="a" style="left:714px;top:15px" width="14" height="14"><path d="M1.5 1.5 L13 13 M13 1.5 L1.5 13" stroke="#222233" stroke-width="1.6"/></svg><svg class="a" style="left:15px;top:57px" width="120" height="120" viewBox="0 0 120 120">
<defs><filter id="bl" x="-5%" y="-5%" width="110%" height="110%"><feGaussianBlur stdDeviation="0.8"/></filter>
<clipPath id="cp"><rect width="120" height="120"/></clipPath>
<radialGradient id="ch" cx="50%" cy="45%" r="55%"><stop offset="0" stop-color="#fbe79a"/><stop offset=".55" stop-color="#f4cf5e"/><stop offset="1" stop-color="#e5800e"/></radialGradient></defs>
<g clip-path="url(#cp)" filter="url(#bl)">
<rect x="-5" y="-5" width="130" height="130" fill="#e2e6ee"/>
<path d="M-5 -5 H50 L0 29 L-5 31 Z" fill="#c8ae80"/>
<path d="M80 -5 H125 V22 Q104 10 80 0 Z" fill="#c8ae80"/>
<path d="M52 3 L62 0 L76 3 L68 11 L58 10 Z" fill="#7f90b4"/>
<path d="M4 42 L28 30 L31 33 L6 46 Z" fill="#c2cce0"/>
<path d="M0 55 L8 52 L10 88 L0 91 Z" fill="#2c4a88"/>
<path d="M2.5 59 L6.5 57.5 L8 84 L2.5 86 Z" fill="#e2e6ee"/>
<path d="M20 112 L70 104 L72 107 L22 115 Z" fill="#b4bccc"/>
<ellipse cx="80" cy="68" rx="72" ry="53" fill="#f5f5f8"/>
<ellipse cx="80" cy="65" rx="64" ry="46" fill="#e4e6ec"/>
<path d="M17 58 Q22 96 73 110 Q105 110 122 96" fill="none" stroke="#24396a" stroke-width="2.2"/>
<g transform="rotate(18 84 49)"><ellipse cx="84" cy="49" rx="55" ry="19.5" fill="#8a4a1e"/><ellipse cx="85" cy="47.5" rx="53.5" ry="17.5" fill="url(#ch)"/></g>
<g transform="rotate(33 63 79)"><ellipse cx="63" cy="79" rx="47" ry="17.5" fill="#8a4a1e"/><ellipse cx="63" cy="77.5" rx="45.5" ry="15.5" fill="url(#ch)"/></g>
<g fill="#d8731a" opacity=".85"><circle cx="62" cy="38" r="1.6"/><circle cx="84" cy="42" r="1.8"/><circle cx="98" cy="52" r="1.5"/><circle cx="74" cy="50" r="1.3"/><circle cx="50" cy="72" r="1.6"/><circle cx="66" cy="80" r="1.5"/><circle cx="80" cy="90" r="1.4"/><circle cx="40" cy="66" r="1.3"/></g>
<path d="M30 33 Q34 23 50 22 Q46 32 30 33 Z M46 24 Q53 17 64 20 Q57 27 46 24 Z" fill="#3a8a3a"/>
<path d="M75 110 Q81 97 97 96 Q94 107 75 110 Z M94 98 Q97 85 104 84 Q108 96 94 98 Z" fill="#3a8a3a"/>
<ellipse cx="100" cy="3" rx="8" ry="5" fill="#5aa04a"/>
<text x="1" y="119" font-size="17" font-weight="bold" font-family="Liberation Serif" fill="#1c2030" transform="rotate(-25 1 119)">retal</text>
</g>
</svg><span class="ml" style="left:194px;top:61px">菜品编号</span><span class="ml" style="left:251px;top:61px">:</span><span class="ml" style="left:264px;top:61px"><span style="font-size:15px">20240812150928</span></span><span class="ml" style="left:194px;top:101px">菜品简码</span><span class="ml" style="left:251px;top:101px">:</span><span class="ml" style="left:264px;top:101px"><span style="font-size:15px">ZSCS</span></span><span class="ml" style="left:194px;top:141px">计量单位</span><span class="ml" style="left:251px;top:141px">:</span><span class="ml" style="left:264px;top:141px">份</span><span class="ml" style="left:194px;top:181px">积分方式</span><span class="ml" style="left:251px;top:181px">:</span><span class="ml" style="left:264px;top:181px">按会员等级积分</span><span class="ml" style="left:194px;top:221px">最低折扣</span><span class="ml" style="left:251px;top:221px">:</span><span class="ml" style="left:264px;top:221px">按会员等级折扣</span><span class="ml" style="left:194px;top:261px">菜品属性</span><span class="ml" style="left:251px;top:261px">:</span><span class="ml" style="left:264px;top:261px">普通菜品</span><span class="ml" style="left:194px;top:301px">会员特价</span><span class="ml" style="left:251px;top:301px">:</span><span class="ml" style="left:264px;top:301px">无会员特价</span><span class="ml" style="left:456px;top:61px">菜品名称</span><span class="ml" style="left:513px;top:61px">:</span><span class="ml" style="left:525px;top:61px">芝士脆薯</span><span class="ml" style="left:456px;top:101px">菜品分类</span><span class="ml" style="left:513px;top:101px">:</span><span class="ml" style="left:525px;top:101px">特色小吃</span><span class="ml" style="left:456px;top:141px">是否积分</span><span class="ml" style="left:513px;top:141px">:</span><span class="ml" style="left:525px;top:141px">是</span><span class="ml" style="left:456px;top:181px">是否打折</span><span class="ml" style="left:513px;top:181px">:</span><span class="ml" style="left:525px;top:181px">是</span><span class="ml" style="left:456px;top:221px">零售价格</span><span class="ml" style="left:513px;top:221px">:</span><span class="ml" style="left:525px;top:221px"><span style="font-size:15px">8</span></span><span class="ml" style="left:456px;top:261px">参考进价</span><span class="ml" style="left:513px;top:261px">:</span><span class="ml" style="left:525px;top:261px"><span style="font-size:15px">0</span></span></div></body></html>
